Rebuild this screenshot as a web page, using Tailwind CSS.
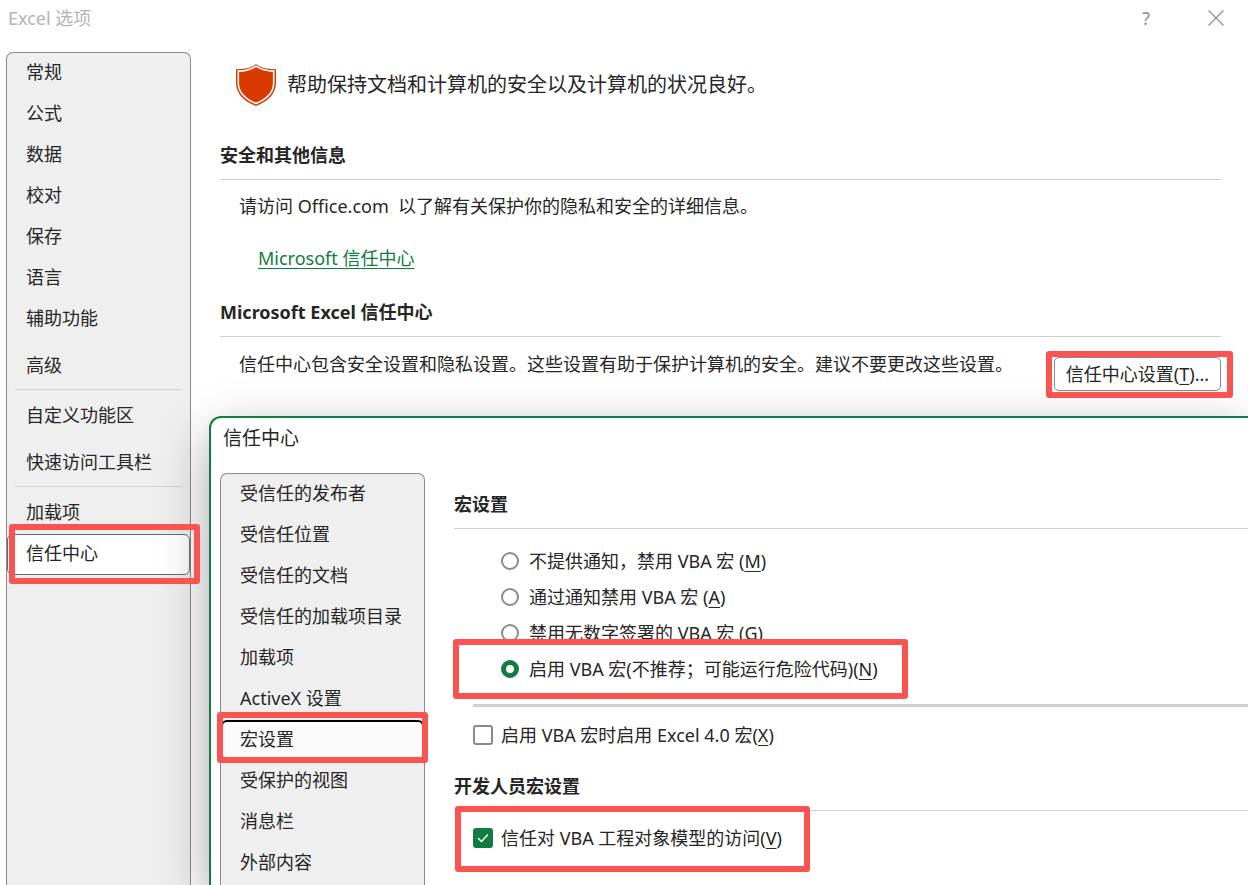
<!DOCTYPE html>
<html lang="zh-CN">
<head>
  <meta charset="UTF-8">
  <meta name="viewport" content="width=device-width, initial-scale=1.0">
  <title>Excel 选项</title>
  <script src="https://cdn.jsdelivr.net/npm/@tailwindcss/browser@4"></script>
</head>
<body class="bg-white text-[#262626] text-[18px] leading-6 font-['Noto_Sans','Noto_Sans_CJK_SC',sans-serif]">
<div class="relative h-screen overflow-hidden flex flex-col">

  <!-- Title bar -->
  <header class="h-[52px] shrink-0 flex items-start justify-between pl-2 pr-6 pt-1.5 text-[#b4b4b4]">
    <h1>Excel 选项</h1>
    <div class="flex items-center gap-[58px] text-[#8f8f8f]">
      <button aria-label="帮助">?</button>
      <button aria-label="关闭" class="h-6">
        <svg class="w-4 h-4" viewBox="0 0 16 16" fill="none" stroke="currentColor" stroke-width="1.2"><path d="M.5.5l15 15M15.500.5l-15 15"/></svg>
      </button>
    </div>
  </header>

  <div class="flex-1 min-h-0 flex">
    <!-- Categories -->
    <nav class="ml-1.5 w-[185px] shrink-0 border border-b-0 border-[#8a8a8a] rounded-t-[7px] bg-[#efefef]">
      <ul>
        <li><a href="#" class="flex items-center h-[41px] pb-[3px] pl-[19px]">常规</a></li>
        <li><a href="#" class="flex items-center h-[41px] pb-[3px] pl-[19px]">公式</a></li>
        <li><a href="#" class="flex items-center h-[41px] pb-[3px] pl-[19px]">数据</a></li>
        <li><a href="#" class="flex items-center h-[41px] pb-[3px] pl-[19px]">校对</a></li>
        <li><a href="#" class="flex items-center h-[41px] pb-[3px] pl-[19px]">保存</a></li>
        <li><a href="#" class="flex items-center h-[41px] pb-[3px] pl-[19px]">语言</a></li>
        <li><a href="#" class="flex items-center h-[41px] pb-[3px] pl-[19px]">辅助功能</a></li>
        <li class="mt-1.5"><a href="#" class="flex items-center h-[41px] pb-[3px] pl-[19px]">高级</a></li>
        <li class="mt-0.5 mb-1.5 mx-2 border-t border-[#cfcfcf]"></li>
        <li><a href="#" class="flex items-center h-[41px] pb-[3px] pl-[19px]">自定义功能区</a></li>
        <li class="mt-1.5"><a href="#" class="flex items-center h-[41px] pb-[3px] pl-[19px]">快速访问工具栏</a></li>
        <li class="mt-0.5 mb-1.5 mx-2 border-t border-[#cfcfcf]"></li>
        <li><a href="#" class="flex items-center h-[41px] pb-[3px] pl-[19px]">加载项</a></li>
        <li class="relative">
          <a href="#" class="flex items-center h-[41px] pb-[3px] pl-[18px] border border-[#6a6a6a] rounded-md bg-white">信任中心</a>
          <span class="absolute z-20 left-0.5 -right-2.5 -top-2.5 -bottom-[9px] border-6 border-[#fb5252] rounded-[3px] pointer-events-none"></span>
        </li>
      </ul>
    </nav>

    <!-- Trust center page -->
    <main class="flex-1 min-w-0 pl-[29px] pr-[27px] pt-3">
      <div class="flex items-center gap-[11px] pl-4 text-[20px]">
        <svg class="w-10 h-[42px]" viewBox="0 0 40 42">
          <path fill="#d83b01" d="M20 0C24 3.500 31 5.300 40 5.200V19C40 29 33 37 20 42C7 37 0 29 0 19V5.200C9 5.300 16 3.500 20 0Z"/>
          <path fill="none" stroke="#fff" stroke-width="1.600" d="M20 2.200C25 5.500 31 7 37.700 7.100V19C37.700 28 31 35 20 39.600C9 35 2.300 28 2.300 19V7.100C9 7 15 5.500 20 2.200Z"/>
        </svg>
        <p>帮助保持文档和计算机的安全以及计算机的状况良好。</p>
      </div>

      <section class="pt-[37px]">
        <h2 class="pb-3 border-b border-[#cfcfcf] font-bold">安全和其他信息</h2>
        <p class="pl-[19px] pt-3.5 whitespace-pre">请访问 Office.com  以了解有关保护你的隐私和安全的详细信息。</p>
        <p class="pl-[38px] pt-7"><a href="#" class="text-[#107c41] underline underline-offset-3">Microsoft 信任中心</a></p>
      </section>

      <section class="pt-[30px]">
        <h2 class="pb-3 border-b border-[#cfcfcf] font-bold">Microsoft Excel 信任中心</h2>
        <div class="flex justify-between items-start pl-[19px]">
          <p class="pt-[15px]">信任中心包含安全设置和隐私设置。这些设置有助于保护计算机的安全。建议不要更改这些设置。</p>
          <div class="relative shrink-0 mt-5">
            <button class="block w-[167px] h-[34px] border border-[#8a8a8a] rounded-[5px] bg-white whitespace-nowrap">信任中心设置(<u class="underline-offset-3">T</u>)...</button>
            <span class="absolute z-20 -left-2 -right-3 -top-1.5 -bottom-[7px] border-6 border-[#fb5252] rounded-[3px] pointer-events-none"></span>
          </div>
        </div>
      </section>
    </main>
  </div>

  <!-- Trust center dialog -->
  <div role="dialog" aria-labelledby="dialogTitle" class="absolute z-10 left-[209px] top-[416px] right-0 bottom-0 flex flex-col bg-white border-t-2 border-l-2 border-[#107c41] rounded-tl-[12px] shadow-[0_18px_50px_rgba(0,0,0,0.36)]">
    <h2 id="dialogTitle" class="h-[55px] shrink-0 pl-3 pt-2 text-[19px]">信任中心</h2>

    <div class="flex-1 min-h-0 flex">
      <nav class="ml-[9px] w-[205px] shrink-0 border border-b-0 border-[#8a8a8a] rounded-t-[7px] bg-[#efefef]">
        <ul>
          <li><a href="#" class="flex items-center h-[41px] pb-[3px] pl-[19px]">受信任的发布者</a></li>
          <li><a href="#" class="flex items-center h-[41px] pb-[3px] pl-[19px]">受信任位置</a></li>
          <li><a href="#" class="flex items-center h-[41px] pb-[3px] pl-[19px]">受信任的文档</a></li>
          <li><a href="#" class="flex items-center h-[41px] pb-[3px] pl-[19px]">受信任的加载项目录</a></li>
          <li><a href="#" class="flex items-center h-[41px] pb-[3px] pl-[19px]">加载项</a></li>
          <li><a href="#" class="flex items-center h-[41px] pb-[3px] pl-[19px]">ActiveX 设置</a></li>
          <li class="relative">
            <a href="#" class="flex items-center h-[41px] pb-[3px] pl-[17px] border-2 border-black rounded-md bg-[#fafafa]">宏设置</a>
            <span class="absolute z-20 -left-1 -right-1 -top-2 -bottom-0.5 border-6 border-[#fb5252] rounded-[3px] pointer-events-none"></span>
          </li>
          <li><a href="#" class="flex items-center h-[41px] pb-[3px] pl-[19px]">受保护的视图</a></li>
          <li><a href="#" class="flex items-center h-[41px] pb-[3px] pl-[19px]">消息栏</a></li>
          <li><a href="#" class="flex items-center h-[41px] pb-[3px] pl-[19px]">外部内容</a></li>
        </ul>
      </nav>

      <div class="flex-1 min-w-0 pl-[29px] pt-[19px]">
        <h3 class="pb-3 border-b border-[#cfcfcf] font-bold">宏设置</h3>
        <div class="pl-[47px] pt-3.5">
          <label class="flex items-center gap-2.5 h-9">
            <input type="radio" name="macro" class="appearance-none w-[18px] h-[18px] rounded-full border-2 border-[#8a8a8a] bg-white checked:border-[5px] checked:border-[#107c41]">
            <span>不提供通知，禁用 VBA 宏 (<u class="underline-offset-3">M</u>)</span>
          </label>
          <label class="flex items-center gap-2.5 h-9">
            <input type="radio" name="macro" class="appearance-none w-[18px] h-[18px] rounded-full border-2 border-[#8a8a8a] bg-white checked:border-[5px] checked:border-[#107c41]">
            <span>通过通知禁用 VBA 宏 (<u class="underline-offset-3">A</u>)</span>
          </label>
          <label class="flex items-center gap-2.5 h-9">
            <input type="radio" name="macro" class="appearance-none w-[18px] h-[18px] rounded-full border-2 border-[#8a8a8a] bg-white checked:border-[5px] checked:border-[#107c41]">
            <span>禁用无数字签署的 VBA 宏 (<u class="underline-offset-3">G</u>)</span>
          </label>
          <div class="relative w-fit">
            <!-- covers the lower edge of the option above -->
            <span class="absolute -left-12 -right-[30px] -top-3 -bottom-3 border-6 border-[#fb5252] rounded-[3px] bg-white pointer-events-none"></span>
            <label class="relative flex items-center gap-2.5 h-9">
              <input type="radio" name="macro" checked class="appearance-none w-[18px] h-[18px] rounded-full border-2 border-[#8a8a8a] bg-white checked:border-[5px] checked:border-[#107c41]">
              <span>启用 VBA 宏(不推荐；可能运行危险代码)(<u class="underline-offset-3">N</u>)</span>
            </label>
          </div>
        </div>

        <div class="ml-[19px] mt-[17px] pt-4 border-t-3 border-[#cfcfcf]">
          <label class="flex items-center gap-2 h-6">
            <input type="checkbox" class="appearance-none w-5 h-5 rounded-[3px] border-2 border-[#8a8a8a] bg-white">
            <span>启用 VBA 宏时启用 Excel 4.0 宏(<u class="underline-offset-3">X</u>)</span>
          </label>
        </div>

        <h3 class="pt-[27px] pb-3 border-b border-[#cfcfcf] font-bold">开发人员宏设置</h3>
        <div class="relative w-fit ml-[19px] mt-[15px]">
          <span class="absolute -left-[18px] -right-7 -top-5 -bottom-[22px] border-6 border-[#fb5252] rounded-[3px] bg-white pointer-events-none"></span>
          <label class="relative flex items-center gap-2 h-6">
            <input type="checkbox" checked class="appearance-none w-5 h-5 rounded-[3px] bg-[#107c41]">
            <svg class="absolute left-0 top-0.5 w-5 h-5 pointer-events-none" viewBox="0 0 20 20" fill="none" stroke="#fff" stroke-width="1.500" stroke-linecap="round" stroke-linejoin="round"><path d="M5.500 10.500l3 3 6-6.500"/></svg>
            <span>信任对 VBA 工程对象模型的访问(<u class="underline-offset-3">V</u>)</span>
          </label>
        </div>
      </div>
    </div>
  </div>
</div>
</body>
</html>
